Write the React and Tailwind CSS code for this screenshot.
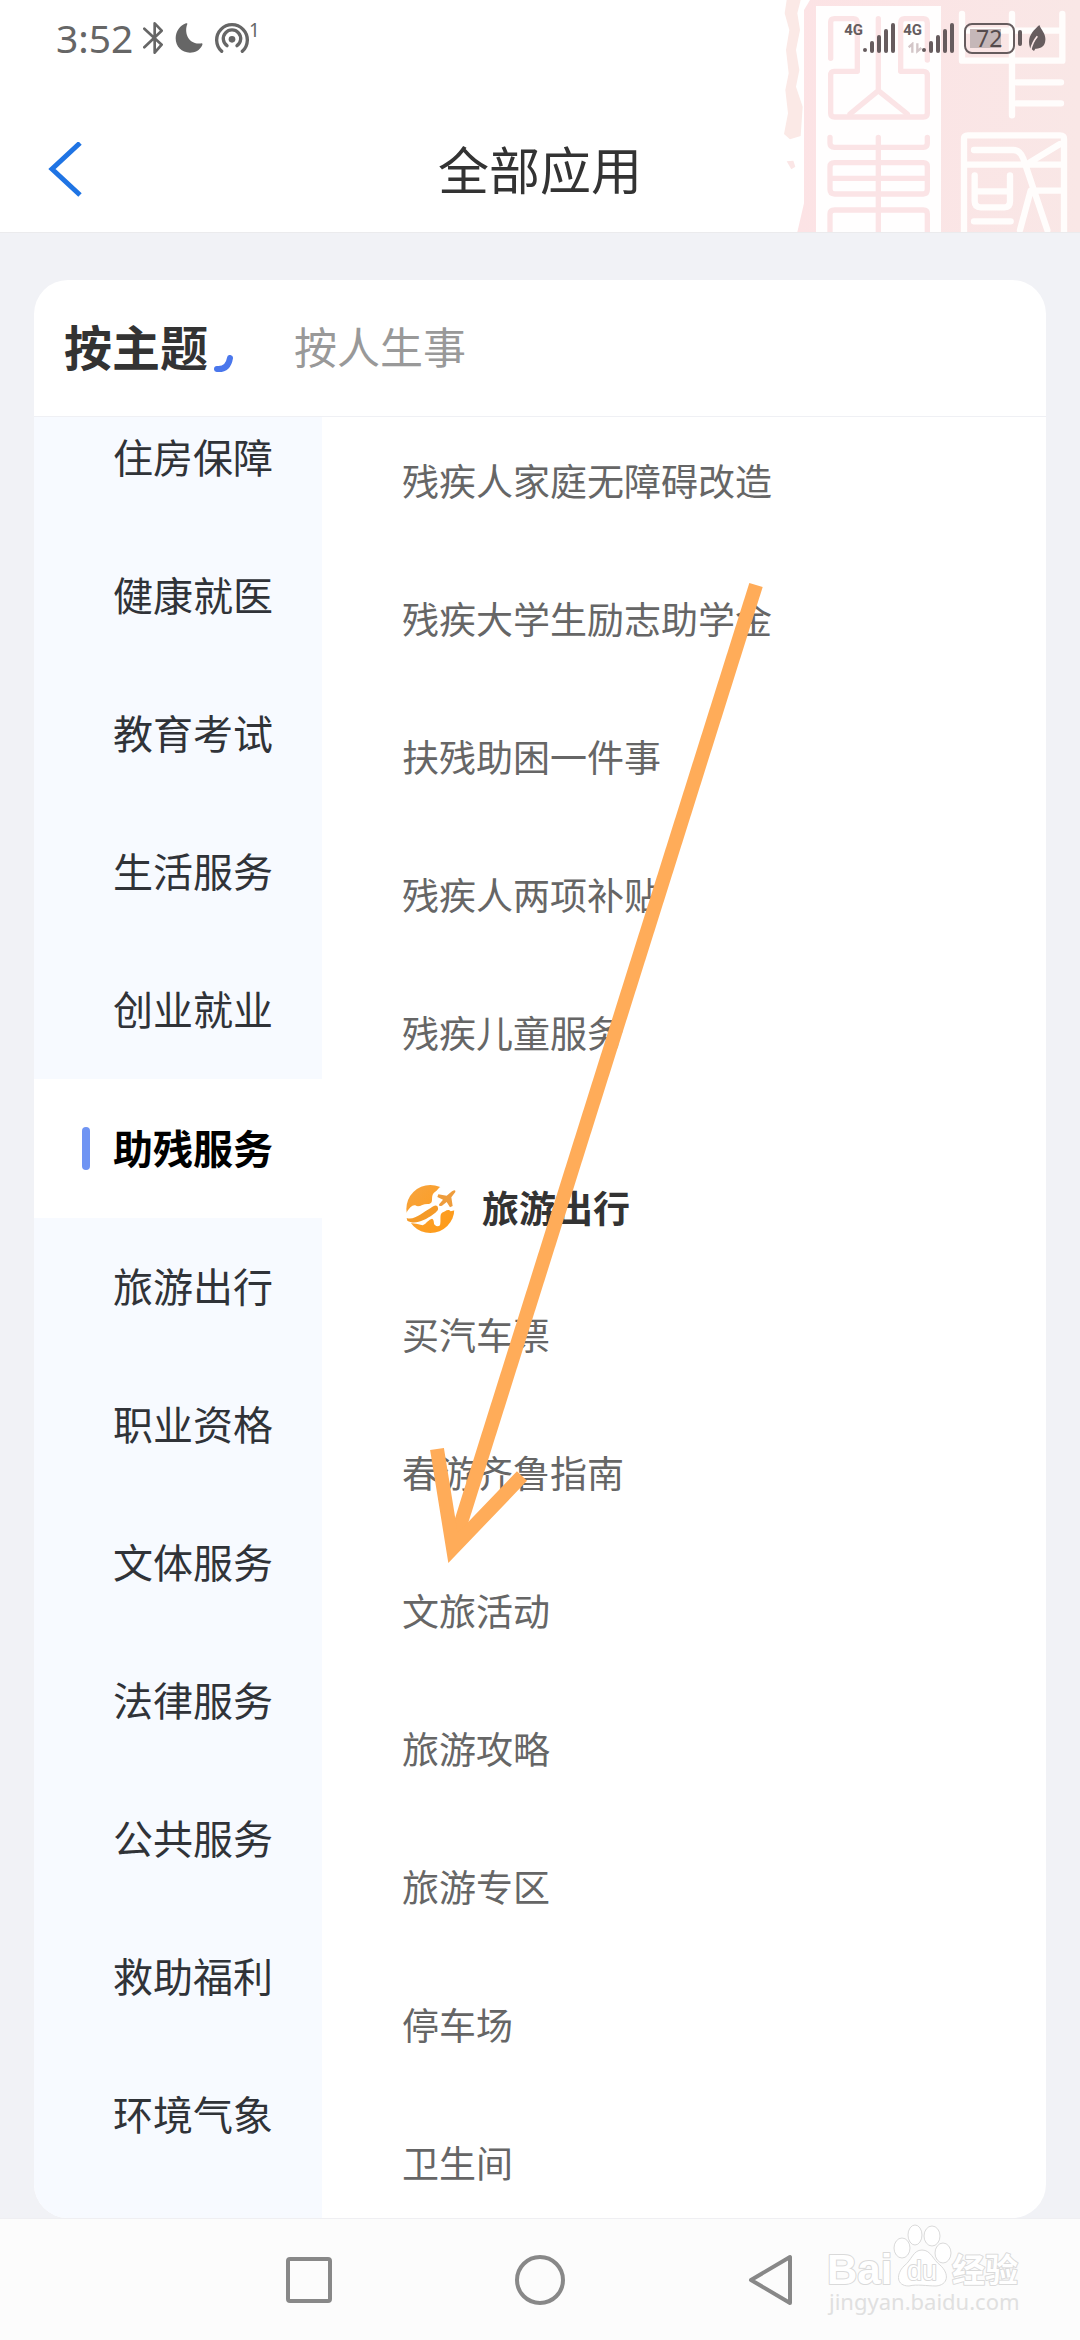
import { useState } from "react";

const CATEGORIES = [
  "住房保障",
  "健康就医",
  "教育考试",
  "生活服务",
  "创业就业",
  "助残服务",
  "旅游出行",
  "职业资格",
  "文体服务",
  "法律服务",
  "公共服务",
  "救助福利",
  "环境气象",
];

const DISABILITY_SERVICES = [
  "残疾人家庭无障碍改造",
  "残疾大学生励志助学金",
  "扶残助困一件事",
  "残疾人两项补贴",
  "残疾儿童服务",
];

const TRAVEL_SERVICES = [
  "买汽车票",
  "春游齐鲁指南",
  "文旅活动",
  "旅游攻略",
  "旅游专区",
  "停车场",
  "卫生间",
];

function SealPattern() {
  return (
    <svg className="absolute top-0 right-0 h-full w-[320px]" viewBox="0 0 960 696" aria-hidden="true">
      <defs>
        <linearGradient id="seal" x1="0" x2="1">
          <stop offset="0" stopColor="#fce3e5" />
          <stop offset="1" stopColor="#f9e7e6" />
        </linearGradient>
      </defs>
      <path
        d="M80 0H122L112 40L120 90L108 150L118 210L108 260L128 320L122 408L90 418L72 402L84 340L76 270L86 220L78 150L88 90L74 40Z"
        fill="#fbe9e6"
      />
      <path d="M150 0H960V696H112L132 610V30Z" fill="url(#seal)" />
      <path d="M80 484L100 482L106 500L94 508Z" fill="#fbe6e6" />
      <path d="M168 18H543V696H168Z" fill="#fffefe" />
      <g fill="none" stroke="#fbe4e6" strokeWidth="16" strokeLinejoin="round" strokeLinecap="round">
        <path d="M212 175V66Q212 56 224 56H280Q292 56 292 70V214H222Q212 214 212 226V340Q212 351 224 351H490Q502 351 502 340V226Q502 214 490 214H422V70Q422 56 434 56H490Q502 56 502 70V180" />
        <path d="M355 56V272M355 272L270 342M355 272L442 342" />
        <path d="M210 412V430Q210 442 224 442H490Q502 442 502 430V412M355 412V696" />
        <path d="M224 488H490Q502 488 502 500V568Q502 582 490 582H224Q210 582 210 568V500Q210 488 224 488ZM212 535H500" />
        <path d="M210 720V642Q210 630 224 630H490Q502 630 502 642V720" />
      </g>
      <g fill="none" stroke="#fffdfc" strokeWidth="19" strokeLinejoin="round" strokeLinecap="round">
        <path d="M606 42V182H907V42M610 92H905M756 42V346M770 247H903M770 310H903" />
        <path d="M612 720V416Q612 406 624 406H900Q912 406 912 416V720" />
        <path d="M642 450H760Q780 450 790 476L862 690M622 494H905M900 432L808 488M780 690L812 572H905" />
        <path d="M644 526V604Q644 622 662 622H734Q750 622 750 604V526M646 574H748M642 664H752" />
      </g>
    </svg>
  );
}

function SignalBars() {
  return (
    <svg className="h-[30px] w-8" viewBox="0 0 32 30" fill="#665c5e" aria-hidden="true">
      <circle cx="2" cy="27" r="2" />
      <rect x="7" y="18" width="4" height="12" rx="2" />
      <rect x="14" y="12" width="4" height="18" rx="2" />
      <rect x="21" y="6" width="4" height="24" rx="2" />
      <rect x="28" y="0" width="4" height="30" rx="2" />
    </svg>
  );
}

function StatusBar() {
  return (
    <div className="relative flex h-[108px] items-start justify-between pt-[18px] pr-[34px] pl-14 text-[#666]">
      <div className="flex h-10 items-center">
        <span className="w-[87px] text-[39px] leading-10">3:52</span>
        <svg className="h-8 w-5" viewBox="0 0 60 96" fill="none" stroke="#666" strokeWidth="8" strokeLinejoin="round" strokeLinecap="round" aria-hidden="true">
          <path d="M4 20L56 68L35 92V4L56 26L4 76" />
        </svg>
        <svg className="ml-3 h-8 w-7" viewBox="0 0 84 96" fill="#666" aria-hidden="true">
          <path d="M37 6C27 30 38 70 80 64Q84 64 82 69C74 86 60 92 45 92C20 92 2 74 2 49C2 28 15 10 33 4Q38 3 37 6Z" />
        </svg>
        <svg className="ml-3 h-8 w-[34px]" viewBox="0 0 102 96" fill="none" stroke="#666" strokeWidth="10" strokeLinecap="round" aria-hidden="true">
          <path d="M20 88A46 46 0 1 1 82 88" />
          <path d="M36 71A26 26 0 1 1 66 71" />
          <circle cx="51" cy="52" r="10" fill="#666" stroke="none" />
        </svg>
        <span className="h-9 text-[19px] leading-5">1</span>
      </div>

      <div className="flex h-10 items-center text-[#665c5e]">
        <span className="flex h-8 w-4 justify-end font-['Roboto',sans-serif] text-[15px] leading-4 font-bold">4G</span>
        <SignalBars />
        <div className="ml-[10px] flex h-8 w-[17px] flex-col items-end font-['Roboto',sans-serif] text-[15px] leading-4 font-bold">
          4G
          <svg className="mt-1 h-3 w-[14px]" viewBox="0 0 42 36" fill="none" stroke="#d3c6c8" strokeWidth="7" aria-hidden="true">
            <path d="M2 16L13 6V32M28 4V28L40 18" />
          </svg>
        </div>
        <SignalBars />
        <div className="ml-[10px] flex h-[31px] w-[51px] items-center rounded-lg border-2 border-[#665c5e] px-1">
          <div className="flex h-[19px] w-[31px] items-center bg-[#c5b7b8]">
            <span className="pl-[6px] text-[23px] leading-6 text-[#554b4d]">72</span>
          </div>
        </div>
        <span className="ml-[3px] h-4 w-1 rounded-full bg-[#665c5e]" />
        <svg className="ml-[6px] h-[26px] w-[18px]" viewBox="0 0 54 78" aria-hidden="true">
          <path d="M34 0C40 16 54 26 52 46C51 64 38 72 22 71L18 78L10 72L6 68C-4 36 14 18 34 0Z" fill="#665c5e" />
          <path d="M8 76C12 56 18 46 28 34" stroke="#fae6e6" strokeWidth="5" fill="none" />
        </svg>
      </div>
    </div>
  );
}

function TravelIcon() {
  return (
    <svg className="h-[50px] w-[50px]" viewBox="0 0 150 150" aria-hidden="true">
      <defs>
        <linearGradient id="globe" x1="0" x2="1" y1="0" y2="1">
          <stop offset="0" stopColor="#f7a43f" />
          <stop offset="1" stopColor="#ff9a14" />
        </linearGradient>
      </defs>
      <circle cx="73" cy="75" r="72" fill="url(#globe)" />
      <path
        d="M0 88Q16 60 28 64C40 72 50 58 68 60C88 58 68 34 90 22C100 12 98 8 112 8L150 10V78L134 82C126 72 116 84 108 86C100 92 106 108 102 124Q94 130 86 122C82 118 86 108 78 104C68 106 62 118 50 124C38 120 24 118 6 116Z"
        fill="#fff"
      />
      <path
        d="M2 102C26 110 52 84 74 72C84 64 94 60 96 72C98 80 88 86 80 92C58 108 26 124 4 110Z"
        fill="#f49a28"
      />
      <path
        d="M100 60L111 47L94 39L97 31L122 35L138 22Q150 14 148 24L136 40L140 66L132 70L122 54L108 65Q96 68 100 60Z"
        fill="#ee9c3c"
      />
    </svg>
  );
}

function ServiceList({ items }) {
  return (
    <ul>
      {items.map((item) => (
        <li key={item}>
          <a href="#" className="flex h-[138px] items-center text-[37px] text-[#666]">
            {item}
          </a>
        </li>
      ))}
    </ul>
  );
}

function PointerArrow() {
  return (
    <svg
      className="pointer-events-none absolute top-[570px] left-[420px] h-[1000px] w-[350px]"
      viewBox="420 570 350 1000"
      fill="none"
      stroke="#ffac59"
      strokeWidth="14"
      strokeMiterlimit="10"
      aria-hidden="true"
    >
      <path d="M756 585L453 1548" />
      <path d="M437 1449L453 1548L522 1476" />
    </svg>
  );
}

function Watermark() {
  return (
    <svg
      className="pointer-events-none absolute right-[54px] bottom-[22px] h-24 w-[200px]"
      viewBox="0 0 200 96"
      fill="#fff"
      stroke="#dadada"
      strokeWidth="2"
      strokeLinejoin="round"
    >
      <g strokeWidth="1">
        <ellipse cx="76" cy="26" rx="8" ry="10" />
        <ellipse cx="89" cy="13" rx="7" ry="10" />
        <ellipse cx="106" cy="14" rx="8" ry="10" />
        <ellipse cx="117" cy="31" rx="8" ry="10" />
        <path d="M96 28C105 28 107 38 114 43C124 52 122 63 110 64C101 64 91 62 83 64C70 64 70 52 78 44C86 38 87 28 96 28Z" />
      </g>
      <g style={{ paintOrder: "stroke" }}>
        <text x="1" y="62" className="font-['Liberation_Sans',sans-serif] text-[42px] font-bold">Bai</text>
        <text x="81" y="58" className="font-['Liberation_Sans',sans-serif] text-[27px]">du</text>
        <text x="126" y="60" className="font-['Noto_Sans_CJK_SC',sans-serif] text-[33px] font-bold">经验</text>
      </g>
      <text x="3" y="88" stroke="none" fill="#e0e0e0" className="font-['Noto_Sans',sans-serif] text-[22px]">
        jingyan.baidu.com
      </text>
    </svg>
  );
}

export default function App() {
  const [tab, setTab] = useState("theme");
  const [active, setActive] = useState("助残服务");

  return (
    <div className="relative flex h-screen flex-col overflow-hidden bg-[#f1f2f6] font-['Noto_Sans','Noto_Sans_CJK_SC',sans-serif]">
      <header className="relative shrink-0 border-b border-[#ebebed] bg-white">
        <SealPattern />
        <StatusBar />
        <div className="relative grid h-[124px] grid-cols-3 items-center px-12">
          <button aria-label="返回" className="w-9">
            <svg className="h-14 w-9" viewBox="0 0 36 56" fill="none" stroke="#1f74e4" strokeWidth="5" aria-hidden="true">
              <path d="M32 1L4 27L32 53" />
            </svg>
          </button>
          <h1 className="text-center text-[51px] text-[#333]">全部应用</h1>
        </div>
      </header>

      <main className="flex min-h-0 flex-1 flex-col px-[34px] pt-[47px]">
        <section className="flex min-h-0 flex-1 flex-col overflow-hidden rounded-[34px] bg-white">
          <div className="flex h-[137px] shrink-0 items-center border-b border-[#eff0f4] px-[30px]">
            <button onClick={() => setTab("theme")} className="flex items-center text-[48px] font-bold text-[#333]">
              按主题
              {tab === "theme" && (
                <svg className="mt-8 ml-[6px] h-[18px] w-5" viewBox="0 0 20 18" fill="none" stroke="#4a77ec" strokeWidth="6" strokeLinecap="round" aria-hidden="true">
                  <path d="M3 14Q14 15 16 3" />
                </svg>
              )}
            </button>
            <button onClick={() => setTab("life")} className="ml-[60px] text-[43px] text-[#999]">
              按人生事
            </button>
          </div>

          <div className="flex min-h-0 flex-1 overflow-hidden">
            <nav className="w-[288px] shrink-0 bg-[#f7faff]">
              <div className="-mt-7">
                {CATEGORIES.map((name) =>
                  name === active ? (
                    <button key={name} className="flex h-[139px] w-full items-center bg-white pl-12 text-[40px] font-bold text-black">
                      <span className="mr-[23px] h-[43px] w-2 rounded-full bg-[#6f94f3]" />
                      {name}
                    </button>
                  ) : (
                    <button
                      key={name}
                      onClick={() => setActive(name)}
                      className="flex h-[138px] w-full items-center pl-[79px] text-[40px] text-[#303338]"
                    >
                      {name}
                    </button>
                  )
                )}
              </div>
            </nav>

            <div className="flex-1 pl-20">
              <div className="-mt-1">
                <ServiceList items={DISABILITY_SERVICES} />
                <h2 className="mt-12 flex h-[116px] items-center gap-[26px] pl-1 text-[37px] font-bold text-[#333]">
                  <TravelIcon />
                  旅游出行
                </h2>
                <ServiceList items={TRAVEL_SERVICES} />
              </div>
            </div>
          </div>
        </section>
      </main>

      <footer className="relative flex h-[122px] shrink-0 items-center justify-center gap-[179px] border-t border-[#efeff2] bg-[#fcfcfc]">
        <button aria-label="最近任务">
          <svg className="size-[52px]" viewBox="0 0 52 52" fill="none" stroke="#888" strokeWidth="4" aria-hidden="true">
            <rect x="5" y="5" width="42" height="42" rx="2" />
          </svg>
        </button>
        <button aria-label="主屏幕">
          <svg className="size-[52px]" viewBox="0 0 52 52" fill="none" stroke="#888" strokeWidth="4" aria-hidden="true">
            <circle cx="26" cy="26" r="23" />
          </svg>
        </button>
        <button aria-label="返回上一页">
          <svg className="size-[52px]" viewBox="0 0 52 52" fill="none" stroke="#888" strokeWidth="4" strokeLinejoin="round" aria-hidden="true">
            <path d="M45 3V49L6 26Z" />
          </svg>
        </button>
        <Watermark />
      </footer>

      <PointerArrow />
    </div>
  );
}
